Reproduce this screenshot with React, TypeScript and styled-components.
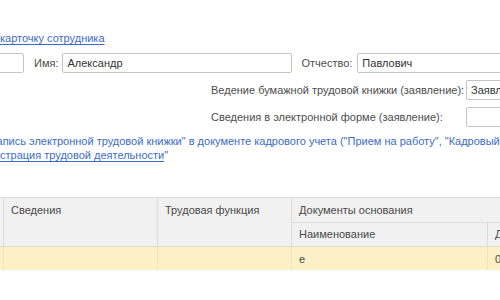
import React from "react";
import styled, { createGlobalStyle } from "styled-components";

const Global = createGlobalStyle`
  html, body { margin: 0; padding: 0; background: #fff; }
  body { font-family: "Liberation Sans", Arial, sans-serif; font-size: 11px; color: #4d4d4d; }
`;

const Page = styled.div`
  width: 500px;
  height: 300px;
  overflow: hidden;
  position: relative;
  padding-top: 31px;
  box-sizing: border-box;
`;

const LinkLine = styled.div<{ $shift: number }>`
  white-space: nowrap;
  margin-left: ${(p) => -p.$shift}px;
  height: 14px;
  line-height: 14px;
  color: #3d6cc4;
`;

const Link = styled.span`
  color: #3d6cc4;
  text-decoration: underline;
  text-underline-offset: 2px;
`;

const FieldRow = styled.div`
  display: flex;
  align-items: center;
  margin-top: 8px;
  height: 20px;
`;

const Label = styled.span<{ $gap?: number }>`
  white-space: nowrap;
  color: #4d4d4d;
  margin-right: ${(p) => p.$gap ?? 5}px;
`;

const Input = styled.div<{ $w: number; $ml?: number; $mr?: number }>`
  box-sizing: border-box;
  flex: none;
  width: ${(p) => p.$w}px;
  height: 20px;
  border: 1px solid #c4c4c4;
  border-radius: 2px;
  background: #fff;
  padding: 0 4px;
  line-height: 18px;
  color: #333;
  white-space: nowrap;
  overflow: hidden;
  margin-left: ${(p) => p.$ml ?? 0}px;
  margin-right: ${(p) => p.$mr ?? 0}px;
`;

const Grid = styled.div`
  display: grid;
  grid-template-columns: 255px 60px;
  row-gap: 7px;
  margin-left: 211px;
  margin-top: 7px;
  align-items: center;
`;

const InfoBlock = styled.div`
  margin-top: 7px;
  display: flex;
  flex-direction: column;
`;

const Table = styled.div`
  margin-top: 35px;
  display: grid;
  grid-template-columns: 3px 154px 134px 196px 60px;
  grid-template-rows: 25px 24px 23px;
  border-top: 1px solid #dcdcdc;
`;

const Head = styled.div<{ $col: string; $row: string; $lb?: boolean; $pt?: number }>`
  grid-column: ${(p) => p.$col};
  grid-row: ${(p) => p.$row};
  background: #f1f1f1;
  border-left: ${(p) => (p.$lb === false ? "none" : "1px solid #dcdcdc")};
  border-bottom: 1px solid #dcdcdc;
  padding: ${(p) => p.$pt ?? 6}px 7px 0;
  color: #4a4a4a;
  white-space: nowrap;
  overflow: hidden;
`;

const Cell = styled.div<{ $col: string; $lb?: boolean }>`
  grid-column: ${(p) => p.$col};
  grid-row: 3;
  background: #fcf0c6;
  border-left: ${(p) => (p.$lb === false ? "none" : "1px solid #f2e3b4")};
  padding: 6px 7px 0;
  color: #4a4a4a;
  white-space: nowrap;
  overflow: hidden;
`;

export default function App() {
  return (
    <>
      <Global />
      <Page>
        <LinkLine $shift={0}>
          <Link>карточку сотрудника</Link>
        </LinkLine>
        <FieldRow>
          <Input $w={100} $ml={-76} $mr={10} />
          <Label $gap={4}>Имя:</Label>
          <Input $w={230} $mr={9}>Александр</Input>
          <Label>Отчество:</Label>
          <Input $w={200}>Павлович</Input>
        </FieldRow>
        <Grid>
          <Label>Ведение бумажной трудовой книжки (заявление):</Label>
          <Input $w={60}>Заявление</Input>
          <Label>Сведения в электронной форме (заявление):</Label>
          <Input $w={60} />
        </Grid>
        <InfoBlock>
          <LinkLine $shift={14}>
            "Запись электронной трудовой книжки" в документе кадрового учета ("Прием на работу", "Кадровый перевод")
          </LinkLine>
          <LinkLine $shift={27}>
            "<Link>Регистрация трудовой деятельности</Link>"
          </LinkLine>
        </InfoBlock>
        <Table>
          <Head $col="1" $row="1 / span 2" $lb={false} />
          <Head $col="2" $row="1 / span 2">Сведения</Head>
          <Head $col="3" $row="1 / span 2">Трудовая функция</Head>
          <Head $col="4 / span 2" $row="1">Документы основания</Head>
          <Head $col="4" $row="2" $pt={5}>Наименование</Head>
          <Head $col="5" $row="2" $pt={5}>Дата</Head>
          <Cell $col="1" $lb={false} />
          <Cell $col="2" />
          <Cell $col="3" />
          <Cell $col="4">е</Cell>
          <Cell $col="5">01.01.2021</Cell>
        </Table>
      </Page>
    </>
  );
}
